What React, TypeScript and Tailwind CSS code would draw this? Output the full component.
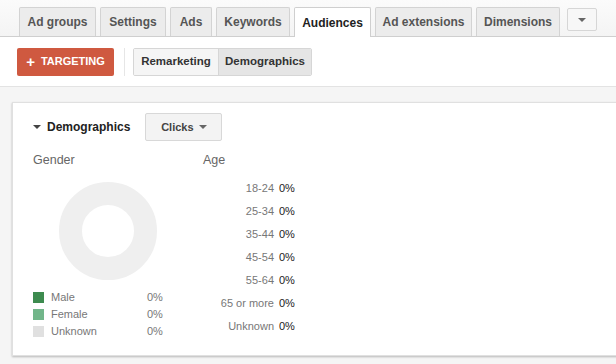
const tabs = [
  { label: "Ad groups", w: "w-[77px]" },
  { label: "Settings", w: "w-[66px]" },
  { label: "Ads", w: "w-[42px]" },
  { label: "Keywords", w: "w-[74px]" },
  { label: "Audiences", w: "w-[77px]" },
  { label: "Ad extensions", w: "w-[97px]" },
  { label: "Dimensions", w: "w-[84px]" },
];

const ages = ["18-24", "25-34", "35-44", "45-54", "55-64", "65 or more", "Unknown"];

const genders = [
  { label: "Male", color: "bg-[#3d8b4f]" },
  { label: "Female", color: "bg-[#72b68a]" },
  { label: "Unknown", color: "bg-[#e0e0e0]" },
];

function Caret({ className = "" }: { className?: string }) {
  return (
    <svg width="8" height="4" viewBox="0 0 8 4" className={className}>
      <path d="M0 0h8L4 4z" fill="currentColor" />
    </svg>
  );
}

export default function App() {
  return (
    <div className="w-[616px] h-[364px] overflow-hidden bg-[#f5f5f5] font-['Liberation_Sans',Arial,sans-serif] whitespace-nowrap">
      {/* Tabs */}
      <div className="h-[37px] bg-gradient-to-b from-[#fbfbfb] to-[#f4f4f4] border-b border-[#cfcfcf] flex items-end pl-[19px] gap-[4px]">
        {tabs.map((t) =>
          t.label === "Audiences" ? (
            <div
              key={t.label}
              className={`${t.w} shrink-0 h-[30px] -mb-px flex items-center justify-center bg-white border border-b-0 border-[#cfcfcf] rounded-t-[2px] text-[12px] font-bold text-[#222]`}
            >
              {t.label}
            </div>
          ) : (
            <div
              key={t.label}
              className={`${t.w} shrink-0 h-[29px] flex items-center justify-center bg-[#ececec] border border-b-0 border-[#d3d3d3] rounded-t-[2px] text-[12px] font-bold text-[#555]`}
            >
              {t.label}
            </div>
          )
        )}
        <div className="shrink-0 self-start mt-[8px] ml-[3px] w-[30px] h-[23px] flex items-center justify-center bg-[#f7f7f7] border border-[#d6d6d6] rounded-[2px] text-[#666]">
          <Caret />
        </div>
      </div>

      {/* Toolbar */}
      <div className="h-[50px] bg-white border-b border-[#e3e3e3] flex items-center pl-[17px]">
        <button className="h-[28px] w-[97px] flex items-center justify-center gap-[6px] bg-[#cf5940] rounded-[2px] text-white text-[11px] font-bold">
          <span className="text-[15px] leading-none -mt-px">+</span>
          <span>TARGETING</span>
        </button>
        <div className="w-px h-[28px] bg-[#e6e6e6] ml-[10px] mr-[8px]" />
        <div className="flex h-[28px] border border-[#d6d6d6] rounded-[2px] overflow-hidden">
          <button className="w-[84px] bg-[#f5f5f5] text-[11.5px] font-bold text-[#333]">Remarketing</button>
          <button className="w-[93px] bg-[#e5e5e5] border-l border-[#d6d6d6] text-[11.5px] font-bold text-[#333]">
            Demographics
          </button>
        </div>
      </div>

      {/* Card */}
      <div className="pt-[15px] pl-[12px]">
        <div className="w-[620px] h-[254px] bg-white border border-[#e0e0e0] shadow-[0_1px_2px_rgba(0,0,0,0.25)] pl-[20px] pt-[10px]">
          <div className="flex items-center">
            <Caret className="text-[#444] mr-[6px]" />
            <span className="text-[12px] font-bold text-[#222]">Demographics</span>
            <button className="ml-[15px] w-[77px] h-[28px] flex items-center justify-center gap-[5px] bg-[#f3f3f3] border border-[#d8d8d8] rounded-[2px] text-[11px] font-bold text-[#444]">
              Clicks
              <Caret className="text-[#666]" />
            </button>
          </div>

          <div className="flex mt-[10px]">
            {/* Gender */}
            <div className="w-[170px] shrink-0">
              <div className="text-[12.5px] text-[#666] leading-[18px]">Gender</div>
              <div className="ml-[26px] mt-[13px] w-[98px] h-[98px] rounded-full border-[23px] border-[#efefef]" />
              <div className="mt-[12px] flex flex-col gap-[6px]">
                {genders.map((g) => (
                  <div key={g.label} className="flex items-center h-[11px] text-[11px] text-[#777]">
                    <span className={`w-[11px] h-[11px] ${g.color}`} />
                    <span className="ml-[7px] w-[96px]">{g.label}</span>
                    <span>0%</span>
                  </div>
                ))}
              </div>
            </div>

            {/* Age */}
            <div>
              <div className="text-[12.5px] text-[#666] leading-[18px]">Age</div>
              <div className="mt-[12px] flex flex-col gap-[9px]">
                {ages.map((a) => (
                  <div key={a} className="flex items-center h-[14px] text-[11px]">
                    <span className="w-[71px] text-right text-[#777]">{a}</span>
                    <span className="ml-[5px] text-[#222]">0%</span>
                  </div>
                ))}
              </div>
            </div>
          </div>
        </div>
      </div>
    </div>
  );
}
